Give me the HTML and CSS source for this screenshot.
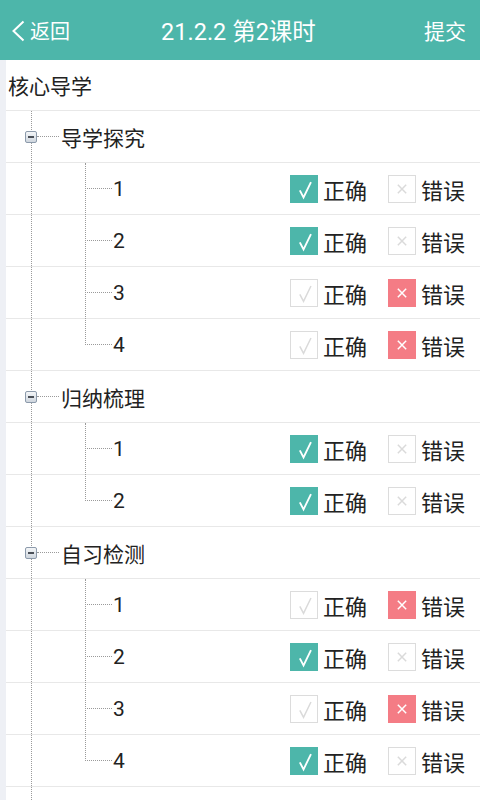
FILE: index.html
```html
<!DOCTYPE html>
<html lang="zh-CN">
<head>
<meta charset="utf-8">
<title>21.2.2 第2课时</title>
<link rel="stylesheet" href="styles.css">
</head>
<body>
<header class="topbar">
  <a class="back">
    <svg class="chev" width="14" height="22" viewBox="0 0 14 22"><path d="M12.5 1.5 L2.5 11 L12.5 20.5" fill="none" stroke="#fff" stroke-width="2"/></svg>
    <span>返回</span>
  </a>
  <h1 class="title">21.2.2 第2课时</h1>
  <a class="submit">提交</a>
</header>

<main class="content">
  <div class="section-title">核心导学</div>
  <div class="tree">

    <div class="group">
      <div class="row group-head"><span class="toggle"></span><span class="hline"></span><span class="glabel">导学探究</span></div>
      <div class="children">
        <div class="row item"><span class="hline"></span><span class="num">1</span>
          <div class="options">
            <span class="opt"><svg class="box ok on" viewBox="0 0 28 28"><path d="M9.5 15.5 L13.5 23 L21.5 6.5"/></svg>正确</span>
            <span class="opt"><svg class="box no" viewBox="0 0 28 28"><path d="M9.5 9.5 L18.5 18.5 M18.5 9.5 L9.5 18.5"/></svg>错误</span>
          </div>
        </div>
        <div class="row item"><span class="hline"></span><span class="num">2</span>
          <div class="options">
            <span class="opt"><svg class="box ok on" viewBox="0 0 28 28"><path d="M9.5 15.5 L13.5 23 L21.5 6.5"/></svg>正确</span>
            <span class="opt"><svg class="box no" viewBox="0 0 28 28"><path d="M9.5 9.5 L18.5 18.5 M18.5 9.5 L9.5 18.5"/></svg>错误</span>
          </div>
        </div>
        <div class="row item"><span class="hline"></span><span class="num">3</span>
          <div class="options">
            <span class="opt"><svg class="box ok" viewBox="0 0 28 28"><path d="M9.5 15.5 L13.5 23 L21.5 6.5"/></svg>正确</span>
            <span class="opt"><svg class="box no on" viewBox="0 0 28 28"><path d="M9.5 9.5 L18.5 18.5 M18.5 9.5 L9.5 18.5"/></svg>错误</span>
          </div>
        </div>
        <div class="row item"><span class="hline"></span><span class="num">4</span>
          <div class="options">
            <span class="opt"><svg class="box ok" viewBox="0 0 28 28"><path d="M9.5 15.5 L13.5 23 L21.5 6.5"/></svg>正确</span>
            <span class="opt"><svg class="box no on" viewBox="0 0 28 28"><path d="M9.5 9.5 L18.5 18.5 M18.5 9.5 L9.5 18.5"/></svg>错误</span>
          </div>
        </div>
      </div>
    </div>

    <div class="group">
      <div class="row group-head"><span class="toggle"></span><span class="hline"></span><span class="glabel">归纳梳理</span></div>
      <div class="children">
        <div class="row item"><span class="hline"></span><span class="num">1</span>
          <div class="options">
            <span class="opt"><svg class="box ok on" viewBox="0 0 28 28"><path d="M9.5 15.5 L13.5 23 L21.5 6.5"/></svg>正确</span>
            <span class="opt"><svg class="box no" viewBox="0 0 28 28"><path d="M9.5 9.5 L18.5 18.5 M18.5 9.5 L9.5 18.5"/></svg>错误</span>
          </div>
        </div>
        <div class="row item"><span class="hline"></span><span class="num">2</span>
          <div class="options">
            <span class="opt"><svg class="box ok on" viewBox="0 0 28 28"><path d="M9.5 15.5 L13.5 23 L21.5 6.5"/></svg>正确</span>
            <span class="opt"><svg class="box no" viewBox="0 0 28 28"><path d="M9.5 9.5 L18.5 18.5 M18.5 9.5 L9.5 18.5"/></svg>错误</span>
          </div>
        </div>
      </div>
    </div>

    <div class="group">
      <div class="row group-head"><span class="toggle"></span><span class="hline"></span><span class="glabel">自习检测</span></div>
      <div class="children">
        <div class="row item"><span class="hline"></span><span class="num">1</span>
          <div class="options">
            <span class="opt"><svg class="box ok" viewBox="0 0 28 28"><path d="M9.5 15.5 L13.5 23 L21.5 6.5"/></svg>正确</span>
            <span class="opt"><svg class="box no on" viewBox="0 0 28 28"><path d="M9.5 9.5 L18.5 18.5 M18.5 9.5 L9.5 18.5"/></svg>错误</span>
          </div>
        </div>
        <div class="row item"><span class="hline"></span><span class="num">2</span>
          <div class="options">
            <span class="opt"><svg class="box ok on" viewBox="0 0 28 28"><path d="M9.5 15.5 L13.5 23 L21.5 6.5"/></svg>正确</span>
            <span class="opt"><svg class="box no" viewBox="0 0 28 28"><path d="M9.5 9.5 L18.5 18.5 M18.5 9.5 L9.5 18.5"/></svg>错误</span>
          </div>
        </div>
        <div class="row item"><span class="hline"></span><span class="num">3</span>
          <div class="options">
            <span class="opt"><svg class="box ok" viewBox="0 0 28 28"><path d="M9.5 15.5 L13.5 23 L21.5 6.5"/></svg>正确</span>
            <span class="opt"><svg class="box no on" viewBox="0 0 28 28"><path d="M9.5 9.5 L18.5 18.5 M18.5 9.5 L9.5 18.5"/></svg>错误</span>
          </div>
        </div>
        <div class="row item"><span class="hline"></span><span class="num">4</span>
          <div class="options">
            <span class="opt"><svg class="box ok on" viewBox="0 0 28 28"><path d="M9.5 15.5 L13.5 23 L21.5 6.5"/></svg>正确</span>
            <span class="opt"><svg class="box no" viewBox="0 0 28 28"><path d="M9.5 9.5 L18.5 18.5 M18.5 9.5 L9.5 18.5"/></svg>错误</span>
          </div>
        </div>
      </div>
    </div>

  </div>
</main>
</body>
</html>
```

FILE: styles.css
```css
* { box-sizing: border-box; }
html, body { margin: 0; padding: 0; }
body {
  width: 480px;
  height: 800px;
  overflow: hidden;
  background: #fff;
  font-family: Roboto, "Noto Sans CJK SC", sans-serif;
  color: #222;
}

.topbar {
  height: 60px;
  background: #4db6aa;
  color: #fff;
  display: flex;
  align-items: center;
  justify-content: space-between;
  padding: 0 14px 0 11px;
}
.back {
  display: flex;
  align-items: center;
  font-size: 20px;
  width: 90px;
}
.chev { margin-right: 5px; margin-top: 1px; }
.title {
  margin: 0;
  font-size: 23.5px;
  font-weight: normal;
}
.submit {
  font-size: 21px;
  width: 90px;
  text-align: right;
}

.content {
  border-left: 6px solid #eef0f5;
  height: 740px;
  display: flex;
  flex-direction: column;
}
.section-title {
  height: 51px;
  flex: none;
  border-bottom: 1px solid #e8e8e8;
  display: flex;
  align-items: center;
  padding-left: 2px;
  font-size: 21px;
  padding-bottom: 1px;
}

.tree {
  position: relative;
  flex: 1;
}
.tree::before {
  content: "";
  position: absolute;
  left: 25px;
  top: 0;
  bottom: 0;
  border-left: 1px dotted #9a9a9a;
}

.row {
  height: 52px;
  border-bottom: 1px solid #e8e8e8;
  display: flex;
  align-items: center;
}
.hline {
  display: block;
  border-top: 1px dotted #9a9a9a;
}

.group-head { padding-left: 19px; }
.toggle {
  position: relative;
  width: 12px;
  height: 12px;
  border: 1px solid #8c9aab;
  border-radius: 2px;
  background: linear-gradient(#f4f6f8, #cfd6de);
  z-index: 1;
}
.toggle::after {
  content: "";
  position: absolute;
  left: 2px;
  right: 2px;
  top: 4px;
  height: 2px;
  background: #4a4f57;
}
.group-head .hline { width: 22px; }
.glabel { font-size: 21px; margin-left: 2px; }

.children { position: relative; }
.children::before {
  content: "";
  position: absolute;
  left: 79px;
  top: 0;
  bottom: 26px;
  border-left: 1px dotted #9a9a9a;
}
.item { padding-left: 79px; padding-right: 15px; }
.item .hline { width: 27px; }
.num { font-size: 21px; margin-left: 1px; }

.options {
  margin-left: auto;
  display: flex;
  gap: 21px;
}
.opt {
  display: flex;
  align-items: center;
  font-size: 22px;
  gap: 5px;
}
.box {
  width: 28px;
  height: 28px;
  display: block;
  fill: none;
  background: #fff;
  border: 1px solid #dcdcdc;
}
.box path { stroke: #dadada; stroke-width: 1.6; fill: none; }
.box.ok.on { background: #4db6aa; border-color: #4db6aa; }
.box.ok.on path { stroke: #fff; stroke-width: 2; }
.box.no.on { background: #f47c85; border-color: #f47c85; }
.box.no.on path { stroke: #fff; stroke-width: 1.6; }
```
